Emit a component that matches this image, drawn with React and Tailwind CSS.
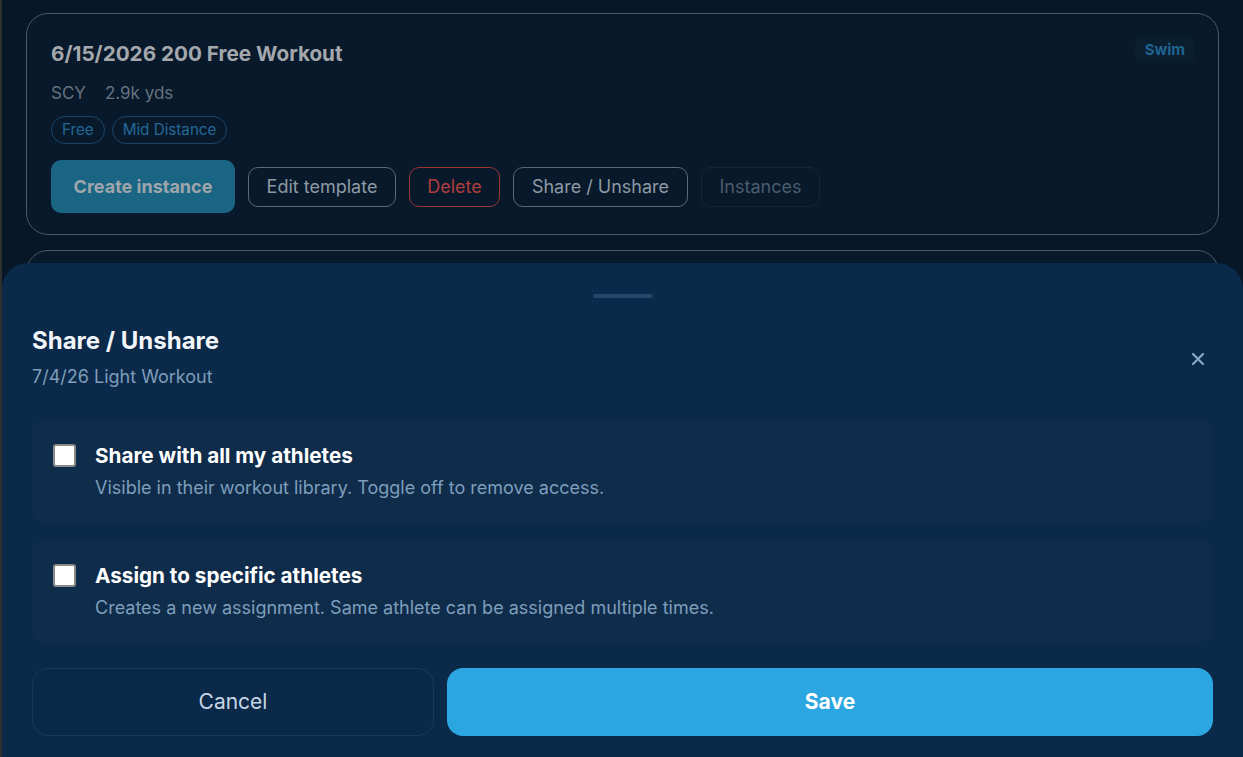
import React, { useState } from 'react';

const inter = { fontFamily: 'Inter, "Noto Sans", sans-serif' };

const WorkoutCard = () => (
  <div className="rounded-[22px] border border-[#4b5968] bg-[#07192b] px-6 pt-[26px] pb-[21px]">
    <div className="flex items-start justify-between">
      <h2 className="text-[20.7px] leading-[28px] font-bold text-[#a4a8ad]">6/15/2026 200 Free Workout</h2>
      <span className="mt-[-3px] mr-[-1px] rounded-md bg-[#0a1e30] px-[10px] py-[3px] text-[15px] leading-[20px] font-bold text-[#1f6590]">
        Swim
      </span>
    </div>
    <div className="mt-[13px] flex gap-[19px] text-[17px] leading-[24px] text-[#67727e]">
      <span>SCY</span>
      <span>2.9k yds</span>
    </div>
    <div className="mt-[11px] flex gap-[7px]">
      {['Free', 'Mid Distance'].map((t) => (
        <span
          key={t}
          className="rounded-full border border-[#19456a] px-[10px] text-[15.2px] leading-[26px] text-[#246995]"
        >
          {t}
        </span>
      ))}
    </div>
    <div className="mt-4 flex items-center gap-[13px]">
      <button className="h-[53px] w-[184px] rounded-[10px] bg-[#1b6584] text-[18px] font-bold text-[#9ea5ab]">
        Create instance
      </button>
      <button className="h-10 w-[148px] rounded-[10px] border border-[#5b6977] text-[18px] text-[#8f99a3]">
        Edit template
      </button>
      <button className="h-10 w-[91px] rounded-[10px] border border-[#9a3535] text-[18px] text-[#b03d3d]">
        Delete
      </button>
      <button className="h-10 w-[175px] rounded-[10px] border border-[#5b6977] text-[18px] text-[#8f99a3]">
        Share / Unshare
      </button>
      <button className="h-10 w-[119px] rounded-[10px] border border-[#15253a] text-[18px] text-[#4c5c6d]">
        Instances
      </button>
    </div>
  </div>
);

const Option = ({ title, desc, checked, onToggle }) => (
  <label className="flex cursor-pointer items-start gap-[19px] rounded-[12px] bg-[#102c4b] pl-[21px] pr-6 py-[22px]">
    <input
      type="checkbox"
      checked={checked}
      onChange={onToggle}
      className="mt-[2px] h-[23px] w-[23px] shrink-0 appearance-none rounded-[3px] border-2 border-[#8a8a8a] bg-white checked:bg-[#2ca6e0]"
    />
    <div>
      <div className="text-[20.7px] leading-[28px] font-bold text-white">{title}</div>
      <div className="mt-[6px] text-[18px] leading-[24px] text-[#7e9ebb]">{desc}</div>
    </div>
  </label>
);

export default function App() {
  const [shareAll, setShareAll] = useState(false);
  const [assign, setAssign] = useState(false);

  return (
    <div className="flex h-[757px] w-full overflow-hidden bg-[#081727]" style={inter}>
      <div className="w-[2px] shrink-0 bg-[#2f3030]" />
      <div className="relative flex-1">
        <div className="flex flex-col gap-[15px] px-6 pt-[13px]">
          <WorkoutCard />
          <div className="h-[200px] rounded-[22px] border border-[#4b5968] bg-[#07192b]" />
        </div>

        {/* bottom sheet */}
        <div className="absolute inset-x-0 top-[263px] bottom-0 rounded-t-[26px] bg-[#0b2949] px-[30px] pt-[31px]">
          <div className="mx-auto h-1 w-[60px] rounded-full bg-[#24466a]" />
          <div className="mt-[27px] flex items-center justify-between">
            <div>
              <h3 className="text-[24px] leading-[32px] font-bold text-[#f1f5f9]">Share / Unshare</h3>
              <p className="mt-[8px] text-[18px] leading-[24px] text-[#7e9ebb]">7/4/26 Light Workout</p>
            </div>
            <button className="mt-[4px] flex h-[30px] w-[30px] items-center justify-center text-[#86a9c6]">
              <svg width="14" height="14" viewBox="0 0 14 14" fill="none" stroke="currentColor" strokeWidth="2.2" strokeLinecap="round">
                <path d="M2 2 L12 12 M12 2 L2 12" />
              </svg>
            </button>
          </div>

          <div className="mt-[31px] flex flex-col gap-[18px]">
            <Option
              title="Share with all my athletes"
              desc="Visible in their workout library. Toggle off to remove access."
              checked={shareAll}
              onToggle={() => setShareAll(!shareAll)}
            />
            <Option
              title="Assign to specific athletes"
              desc="Creates a new assignment. Same athlete can be assigned multiple times."
              checked={assign}
              onToggle={() => setAssign(!assign)}
            />
          </div>

          <div className="mt-[26px] flex gap-[13px]">
            <button className="h-[68px] w-[402px] rounded-[16px] border border-[#1b3a5b] text-[21px] text-[#c6d6e6]">
              Cancel
            </button>
            <button className="h-[68px] flex-1 rounded-[16px] bg-[#2ca6e0] text-[21px] font-bold text-white">
              Save
            </button>
          </div>
        </div>
      </div>
    </div>
  );
}
